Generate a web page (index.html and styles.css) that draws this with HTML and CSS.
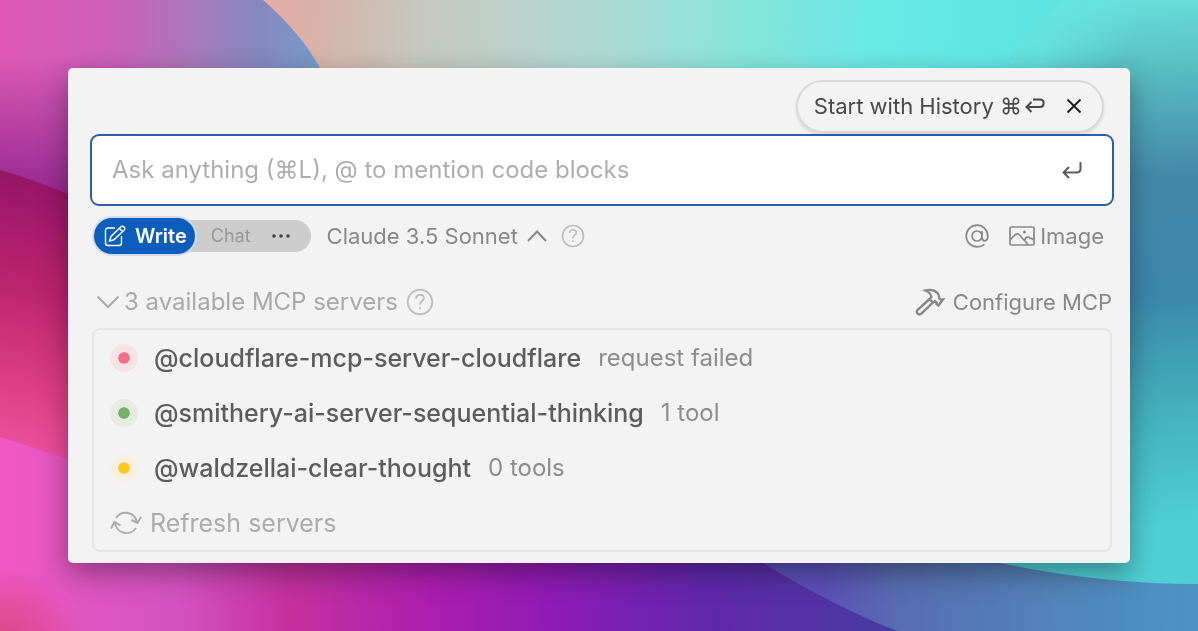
FILE: index.html
```html
<!DOCTYPE html>
<html lang="en">
<head>
<meta charset="utf-8">
<meta name="viewport" content="width=device-width, initial-scale=1">
<title>MCP servers</title>
<link rel="stylesheet" href="styles.css">
</head>
<body>
<svg class="wallpaper" viewBox="0 0 1198 631" preserveAspectRatio="none" aria-hidden="true">
  <defs>
    <linearGradient id="sky" x1="250" x2="1198" y1="0" y2="30" gradientUnits="userSpaceOnUse">
      <stop offset="0" stop-color="#ecaaa2"/><stop offset=".07" stop-color="#d8b2a8"/><stop offset=".18" stop-color="#c6c8be"/>
      <stop offset=".36" stop-color="#b1d8d3"/><stop offset=".52" stop-color="#86e5da"/><stop offset=".66" stop-color="#6ae9e5"/><stop offset=".8" stop-color="#60e5e2"/><stop offset="1" stop-color="#5edfdc"/>
    </linearGradient>
    <linearGradient id="violet" x1="0" x2="320" y1="0" y2="0" gradientUnits="userSpaceOnUse">
      <stop offset="0" stop-color="#e25ab8"/><stop offset=".35" stop-color="#cc60bb"/><stop offset=".6" stop-color="#a978bd"/><stop offset=".82" stop-color="#8489c1"/><stop offset="1" stop-color="#769bc8"/>
    </linearGradient>
    <linearGradient id="violetShade" x1="0" x2="-10" y1="50" y2="190" gradientUnits="userSpaceOnUse">
      <stop offset="0" stop-color="#962a90" stop-opacity="0"/><stop offset="1" stop-color="#962a90"/>
    </linearGradient>
    <linearGradient id="crimson" x1="60" x2="0" y1="190" y2="445" gradientUnits="userSpaceOnUse">
      <stop offset="0" stop-color="#981668"/><stop offset=".4" stop-color="#bd2470"/><stop offset=".75" stop-color="#dc3f82"/><stop offset="1" stop-color="#ea509e"/>
    </linearGradient>
    <linearGradient id="base" x1="0" x2="900" y1="0" y2="0" gradientUnits="userSpaceOnUse">
      <stop offset="0" stop-color="#f058c4"/><stop offset=".08" stop-color="#e156c0"/><stop offset=".2" stop-color="#d352c0"/><stop offset=".32" stop-color="#c4319e"/><stop offset=".48" stop-color="#ac1eae"/><stop offset=".62" stop-color="#8d1bb5"/><stop offset=".78" stop-color="#6127ad"/><stop offset="1" stop-color="#463c9e"/>
    </linearGradient>
    <radialGradient id="ember" cx="0" cy="650" r="85" gradientUnits="userSpaceOnUse">
      <stop offset="0" stop-color="#d9457c"/><stop offset="1" stop-color="#d9457c" stop-opacity="0"/>
    </radialGradient>
    <linearGradient id="slate" x1="820" x2="1198" y1="0" y2="0" gradientUnits="userSpaceOnUse">
      <stop offset="0" stop-color="#5c4fb8"/><stop offset=".2" stop-color="#586cb0"/><stop offset=".6" stop-color="#5283b8"/><stop offset="1" stop-color="#4a95c4"/>
    </linearGradient>
    <linearGradient id="ocean" x1="1120" x2="1150" y1="0" y2="590" gradientUnits="userSpaceOnUse">
      <stop offset="0" stop-color="#68dfd8"/><stop offset=".1" stop-color="#5ac3c4"/><stop offset=".3" stop-color="#4489ab"/><stop offset=".5" stop-color="#3b88ab"/><stop offset=".72" stop-color="#45b5bf"/><stop offset=".9" stop-color="#4fcfd4"/><stop offset="1" stop-color="#4fcfd4"/>
    </linearGradient>
    <linearGradient id="oceanEdge" x1="1020" x2="1130" y1="0" y2="50" gradientUnits="userSpaceOnUse">
      <stop offset="0" stop-color="#66e5e0"/><stop offset=".35" stop-color="#66e5e0" stop-opacity=".8"/><stop offset="1" stop-color="#66e5e0" stop-opacity="0"/>
    </linearGradient>
  </defs>
  <rect width="1198" height="631" fill="url(#base)"/>
  <rect width="100" height="100" y="540" fill="url(#ember)"/>
  <path d="M240 0H1198V300H330Z" fill="url(#sky)"/>
  <path d="M0 0H263Q300 32 320 68L340 110V260H0Z" fill="url(#violet)"/>
  <path d="M0 0H263Q300 32 320 68L340 110V260H0Z" fill="url(#violetShade)"/>
  <path d="M0 170Q36 180 90 203V468Q40 449 0 437Z" fill="url(#crimson)"/>
  <path d="M740 543L763 563Q835 607 897 631H1198V500H740Z" fill="url(#slate)"/>
  <path d="M1065 0Q1025 35 1000 75V563Q1100 584 1198 584V0Z" fill="url(#ocean)"/>
  <path d="M1065 0Q1025 35 1000 75H1198V0Z" fill="url(#oceanEdge)"/>
</svg>
<main class="stage">
  <section class="panel">
    <div class="history-row">
      <div class="history-chip">
        <button class="history-start" type="button">Start with History ⌘<svg width="20" height="18" viewBox="0 0 20 18"><path d="M8 2.500H15Q18.500 2.500 18.500 5.500V7Q18.500 10 15 10H2M6.500 5L1.500 10L6.500 15"/></svg></button>
        <button class="close" type="button" aria-label="Dismiss"><svg width="16" height="16" viewBox="0 0 16 16"><path d="M1.500 1.500L14.500 14.500M14.500 1.500L1.500 14.500"/></svg></button>
      </div>
    </div>
    <form class="prompt">
      <input class="prompt-input" type="text" aria-label="Message" placeholder="Ask anything (⌘L), @ to mention code blocks">
      <button class="send" type="button" aria-label="Send"><svg width="20" height="18" viewBox="0 0 20 18"><path d="M18.500 1V7.500Q18.500 11.500 14.500 11.500H1.500M7 6L1.500 11.500L7 17"/></svg></button>
    </form>
    <div class="toolbar">
      <div class="modes">
        <button class="mode-write" type="button"><svg width="22" height="22" viewBox="0 0 22 22"><path d="M11 3H4Q1.500 3 1.500 5.500V18Q1.500 20.500 4 20.500H15Q17.500 20.500 17.500 18V11M5.500 16L7 11.500L17 1.800Q18.500.5 20 2Q21.500 3.500 20.200 5L10 14.800ZM15.500 3.500L18.500 6.500"/></svg>Write</button>
        <button class="mode-chat" type="button">Chat</button>
        <button class="mode-more" type="button" aria-label="More modes"><svg width="20" height="6" viewBox="0 0 20 6"><circle cx="3" cy="3" r="1.800"/><circle cx="10" cy="3" r="1.800"/><circle cx="17" cy="3" r="1.800"/></svg></button>
      </div>
      <div class="model">
        <select class="model-select" aria-label="Model"><option>Claude 3.5 Sonnet</option></select>
        <svg class="caret" width="20" height="12" viewBox="0 0 20 12"><path d="M1 11L10 1.500L19 11"/></svg>
      </div>
      <button class="help" type="button" aria-label="About models"><svg width="24" height="24" viewBox="0 0 24 24"><circle cx="12" cy="12" r="10.500"/><path d="M8.700 9Q9 5.800 12 5.800Q15.300 5.800 15.300 8.700Q15.300 10.300 13.500 11.400Q12 12.300 12 14.300M12 16.500V18"/></svg></button>
      <div class="attach">
        <button class="tool" type="button" aria-label="Mention"><svg width="24" height="24" viewBox="0 0 24 24"><circle cx="12" cy="12" r="5"/><path d="M17 7V13.500Q17 16.800 19.800 16.800Q22.800 16.500 22.800 12A10.800 10.800 0 1 0 12 22.800Q16.500 22.800 19.500 20.300"/></svg></button>
        <button class="tool" type="button"><svg width="26" height="20" viewBox="0 0 26 20"><rect x="1" y="1" width="24" height="18" rx="1.500"/><path d="M1 14L6.500 8.500Q8.500 7 10.500 9L19 18.500M15.500 14.500Q16 11 19 11Q20.500 11 21 12.500Q24 12 25 14.500"/><circle class="dot" cx="15.500" cy="6" r="1.500"/></svg>Image</button>
      </div>
    </div>
    <div class="servers-head">
      <button class="servers-toggle" type="button" aria-expanded="true"><svg width="24" height="14" viewBox="0 0 24 14"><path d="M1.500 1.500L12 12L22.500 1.500"/></svg>3 available MCP servers</button>
      <button class="help" type="button" aria-label="About MCP servers"><svg width="28" height="28" viewBox="0 0 24 24"><circle cx="12" cy="12" r="10.500"/><path d="M8.700 9Q9 5.800 12 5.800Q15.300 5.800 15.300 8.700Q15.300 10.300 13.500 11.400Q12 12.300 12 14.300M12 16.500V18"/></svg></button>
      <button class="configure" type="button"><svg width="30" height="28" viewBox="0 0 30 28"><path d="M14.500 11L2.500 22Q1 24 2.700 25.700Q4.500 27.300 6.300 25.700L18 14.500M14.500 11L16.500 9Q15.500 4.500 10.500 2.500Q17.500.5 22.500 5Q24.500 7 24 10L26 12L28 11.500L23.500 17.500L21.500 16V14.500L20 13L18 14.500L14.500 11"/></svg>Configure MCP</button>
    </div>
    <ul class="servers">
      <li class="server"><span class="status failed"></span><span class="name">@cloudflare-mcp-server-cloudflare</span><span class="detail">request failed</span></li>
      <li class="server"><span class="status ready"></span><span class="name">@smithery-ai-server-sequential-thinking</span><span class="detail">1 tool</span></li>
      <li class="server"><span class="status waiting"></span><span class="name">@waldzellai-clear-thought</span><span class="detail">0 tools</span></li>
      <li class="server"><button class="refresh" type="button"><svg width="32" height="26" viewBox="0 0 32 26"><path d="M6 8A11.500 11.500 0 0 1 27 12.500M21.500 10L27.500 13L31 7M26 18A11.500 11.500 0 0 1 5 12.500M1 18.500L4.500 12L10.500 15.500"/></svg>Refresh servers</button></li>
    </ul>
  </section>
</main>
</body>
</html>
```
FILE: styles.css
```css
* { box-sizing: border-box; }
body {
  margin: 0;
  min-height: 100vh;
  background: #c4319e;
  font-family: Inter, "Liberation Sans", sans-serif;
  font-size: 24px;
  line-height: 28px;
  color: #5c5c5c;
}
button, input, select { font: inherit; color: inherit; }
button {
  display: flex;
  align-items: center;
  padding: 0;
  border: 0;
  background: none;
  white-space: nowrap;
}
svg { display: block; flex: none; fill: none; stroke: currentColor; stroke-width: 2; }
.wallpaper {
  position: fixed;
  inset: 0;
  z-index: -1;
  width: 100%;
  height: 100%;
  stroke: none;
}
.stage { padding: 68px; }
.panel {
  display: flex;
  flex-direction: column;
  padding: 12px 16px 11px 22px;
  border-radius: 5px;
  background: #f3f3f3;
  box-shadow: 0 10px 28px rgba(0, 0, 0, .36);
}
.history-row { display: flex; justify-content: flex-end; padding-right: 10px; }
.history-chip {
  display: flex;
  align-items: center;
  gap: 21px;
  height: 53px;
  padding: 0 20px 2px 16px;
  border: 2px solid #d8d8d8;
  border-radius: 27px;
  color: #484848;
  font-size: 22px;
  box-shadow: 0 2px 3px rgba(0, 0, 0, .12);
}
.history-start { gap: 3px; }
.close { color: #1c1c1c; }
.close svg { stroke-width: 1.8; }
.prompt {
  display: flex;
  align-items: center;
  height: 72px;
  margin-top: 1px;
  padding: 0 30px 0 20px;
  border: 2px solid #2a5fa5;
  border-radius: 9px;
  background: #fff;
}
.prompt-input {
  flex: 1;
  min-width: 0;
  padding: 0;
  border: 0;
  outline: 0;
  background: none;
}
.prompt-input::placeholder { color: #aeaeae; opacity: 1; }
.toolbar { display: flex; align-items: center; margin-top: 10px; padding: 0 10px 0 4px; height: 40px; color: #888; }
.modes {
  display: flex;
  align-items: center;
  height: 32px;
  padding-right: 20px;
  border-radius: 16px;
  background: #cdcdcd;
  font-size: 18px;
}
.mode-write {
  gap: 9px;
  height: 36px;
  padding: 0 8px 0 10px;
  border-radius: 18px;
  background: #0d5dbd;
  color: #fff;
  font-size: 20px;
  font-weight: 600;
  box-shadow: 0 0 0 2px #d3ddf0;
}
.mode-write svg { stroke-width: 1.4; }
.mode-chat { margin-left: 16px; color: #989898; }
.mode-more { margin-left: 20px; color: #444; }
.mode-more svg { fill: currentColor; stroke: none; }
.model { display: flex; align-items: center; gap: 8px; margin: 0 14px 0 16px; font-size: 22px; }
.model-select { appearance: none; padding: 0; border: 0; background: none; }
.help { color: #bdbdbd; }
.help svg { stroke-width: 1.6; }
.attach { display: flex; gap: 20px; margin-left: auto; font-size: 22px; }
.tool { gap: 5px; }
.tool svg { stroke-width: 1.7; }
.tool .dot { fill: currentColor; stroke: none; }
.servers-head {
  display: flex;
  align-items: center;
  gap: 8px;
  height: 40px;
  margin-top: 26px;
  padding: 0 2px 0 6px;
}
.servers-toggle { gap: 4px; color: #a9a9a9; }
.configure { gap: 8px; margin-left: auto; color: #888; font-size: 22px; }
.configure svg { stroke-width: 2.4; }
.servers {
  margin: 6px 2px 0;
  padding: 0;
  border: 2px solid #e6e6e8;
  border-radius: 8px;
  list-style: none;
}
.server { display: flex; align-items: center; height: 55px; padding-left: 16px; }
.status { width: 28px; height: 28px; border: 8px solid; border-radius: 50%; background-clip: padding-box; }
.failed { border-color: #f5e4e6; background-color: #fb6c84; }
.ready { border-color: #e8ebe4; background-color: #79b065; }
.waiting { border-color: #f5f0e0; background-color: #fbca20; }
.name { margin-left: 16px; font-size: 25px; font-weight: 500; }
.detail { margin-left: 17px; color: #8d8d8d; }
.refresh { gap: 8px; color: #acacac; font-size: 25px; }
```
